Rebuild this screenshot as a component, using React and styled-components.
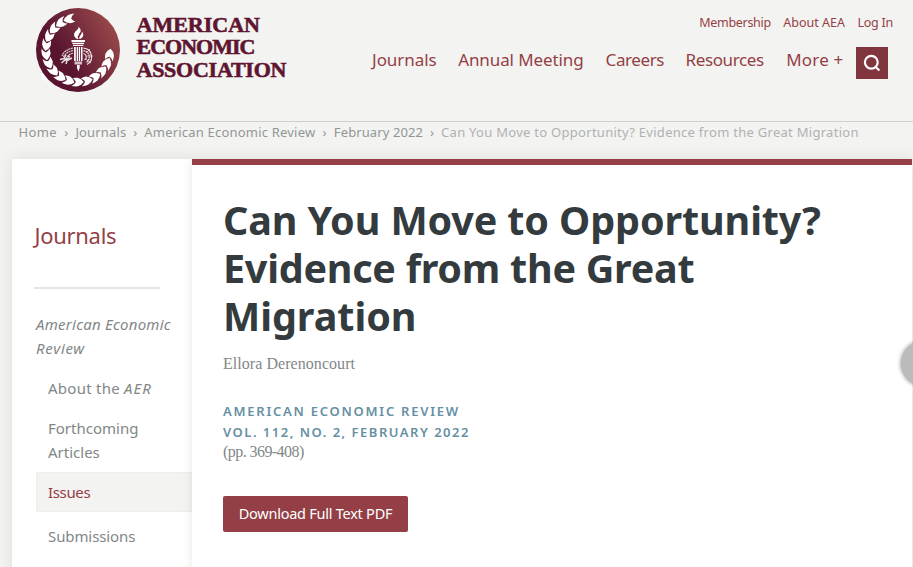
import React from "react";
import styled, { createGlobalStyle, css } from "styled-components";

const GlobalStyle = createGlobalStyle`
  * { box-sizing: border-box; }
  body {
    margin: 0;
    overflow: hidden;
    background: #f3f3f1;
    font-family: "Noto Sans", sans-serif;
    color: #818787;
  }
  a { color: inherit; text-decoration: none; }
`;

const tracking = css`letter-spacing: ${(p) => p.$track || 0}px;`;

const Page = styled.div`
  position: relative;
  width: 913px;
  height: 567px;
  overflow: hidden;
`;

const Header = styled.header`
  display: flex;
  justify-content: space-between;
  height: 122px;
  padding: 8px 20px 0 36px;
  border-bottom: 1px solid #cdd0ce;
`;

const Brand = styled.a`
  display: flex;
  gap: 16.5px;
`;

const Emblem = styled.svg`
  width: 84px;
  height: 84px;
  overflow: visible;
`;

const Wordmark = styled.div`
  display: flex;
  flex-direction: column;
  padding-top: 5.5px;
  font: bold 22px/22.5px "Liberation Serif", serif;
  color: #5f1530;
  -webkit-text-stroke: 0.6px #5f1530;
`;

const WordmarkLine = styled.span`
  white-space: nowrap;
  ${tracking}
`;

const Menus = styled.div`
  display: flex;
  flex-direction: column;
  align-items: flex-end;
  color: #943f46;
`;

const UtilityNav = styled.nav`
  display: flex;
  gap: 12.5px;
  padding-top: 5px;
  font-size: 12.5px;
  line-height: 20px;
`;

const MainNav = styled.nav`
  display: flex;
  margin: 11px 5px 0 0;
  font-size: 17px;
  line-height: 31px;
`;

const MenuLink = styled.a`
  white-space: nowrap;
  margin-right: ${(p) => p.$after || 0}px;
  ${tracking}
`;

const SearchButton = styled.button`
  width: 32px;
  height: 32px;
  margin-top: 3px;
  padding: 0;
  border: 0;
  background: #81363d;
  svg { display: block; }
`;

const Breadcrumbs = styled.nav`
  display: flex;
  height: 37px;
  padding-left: 18.5px;
  font-size: 13px;
  line-height: 20px;
  white-space: nowrap;
  color: #919796;
`;

const Crumb = styled.a`
  color: ${(p) => (p.$current ? "#afb2b1" : "inherit")};
  ${tracking}
`;

const Separator = styled.span`
  width: ${(p) => p.$width}px;
  text-align: center;
`;

const Panel = styled.div`
  display: flex;
  width: 900px;
  height: 420px;
  margin-left: 12px;
  background: #fff;
  box-shadow: 0 0 14px rgba(60, 60, 40, 0.11);
`;

const Sidebar = styled.aside`
  width: 180px;
  padding-top: 61px;
`;

const SidebarTitle = styled.h2`
  margin: 0 0 38px 22.5px;
  font-size: 22px;
  line-height: 30px;
  font-weight: 400;
  letter-spacing: -0.3px;
  color: #943f46;
`;

const Rule = styled.hr`
  width: 126px;
  height: 2px;
  margin: -1px 0 23px 22px;
  border: 0;
  background: #e4e5e5;
`;

const SideLink = styled.a`
  display: block;
  margin-left: 24px;
  padding: 8px 0 8px 12px;
  font-size: 15px;
  line-height: 24px;
  ${tracking}
  ${(p) => p.$heading && css`
    padding: 0 0 8px 0;
    font-style: italic;
  `}
  ${(p) => p.$active && css`
    margin-bottom: 4px;
    padding: 7px 0 7px 11px;
    background: #f3f3f1;
    border: 1px solid #eeefed;
    border-right: 0;
    border-radius: 2px 0 0 2px;
    color: #943f46;
  `}
`;

const Tracked = styled.span`
  ${tracking}
`;

const Article = styled.main`
  position: relative;
  width: 720px;
  padding: 31px 0 0 31px;
  border-top: 6px solid #943f46;
  background: #fff;
  box-shadow: 0 0 9px rgba(60, 60, 40, 0.12);
  clip-path: inset(0 0 0 -12px);
`;

const Title = styled.h1`
  margin: 0 0 14px;
  font-size: 39.5px;
  line-height: 48px;
  font-weight: 700;
  color: #343b3e;
`;

const Line = styled.span`
  display: block;
  white-space: nowrap;
  ${tracking}
`;

const Author = styled.div`
  margin-bottom: 27px;
  font: 16px/20px "Liberation Serif", serif;
  letter-spacing: 0.05px;
`;

const Issue = styled.a`
  display: block;
  font-size: 13px;
  line-height: 21px;
  font-weight: 600;
  color: #6690a3;
`;

const Pages = styled.div`
  font: 16px/18px "Liberation Serif", serif;
  letter-spacing: -0.56px;
`;

const DownloadButton = styled.button`
  display: block;
  width: 185px;
  height: 36px;
  margin-top: 35px;
  padding: 0 0 2px;
  border: 0;
  border-radius: 2px;
  background: #943f46;
  color: #fff;
  font: 14.5px/34px "Noto Sans", sans-serif;
  letter-spacing: -0.25px;
  white-space: nowrap;
`;

const FloatingTab = styled.div`
  position: absolute;
  left: 901px;
  top: 341px;
  width: 45px;
  height: 45px;
  border-radius: 50%;
  background: #bbb;
  box-shadow: 0 0 4px rgba(0, 0, 0, 0.5);
`;

const LEAVES = 16;

function Laurel() {
  return Array.from({ length: LEAVES }, (_, i) => {
    const angle = 9 + i * 16.4;
    return (
      <path
        key={i}
        transform={`rotate(${angle} 42 42) translate(74 40.5) rotate(-90)`}
        d="M-6.4,-3.9 Q-3.5,-4.5 -1,-4.3 Q2.8,-3 4.8,0 Q2.8,3 -1,4.3 Q-4,4.7 -7.4,4.1 Q-4.6,3 -3,0 Q-4.6,-3 -6.4,-3.9Z"
      />
    );
  });
}

function AssociationEmblem() {
  return (
    <Emblem viewBox="0 0 84 84">
      <defs>
        <linearGradient id="seal" x1="0.2" y1="0.65" x2="0.98" y2="0.2">
          <stop offset="0.15" stopColor="#591430" />
          <stop offset="1" stopColor="#9c4c4c" />
        </linearGradient>
      </defs>
      <path d="M5 63 L6 72 L14 73 Z" fill="#fff" />
      <circle cx="42" cy="42" r="42" fill="url(#seal)" />
      <g fill="#fff">
        <Laurel />
        <path d="M41 31 C36 28 38 24 42 21 Q43 19.5 42 18.5 Q47 22 43 26 Q41 28.5 42.5 31 Z" />
        <path d="M43.5 31 C42.5 28 46 27 46 23.5 C48.8 27 46.5 30.5 43.5 31 Z" />
        <path d="M35.5 32h13.4v2h-13.4z M36.3 34.8h11.8v1.2h-11.8z M37 36.7h10.4v1.3h-10.4z" />
        <path d="M38.1 39h1.7v14h-1.7z M40.7 39h1.3v14h-1.3z M42.8 39h1.3v14h-1.3z M45 39h1.5v14h-1.5z" />
        <path d="M41 57h2.7v3l-1.3 3.5-1.4-3.5z" />
      </g>
      <path d="M38.5 53.5h7.6v3h-7.6z" fill="#d6bfc7" />
      <g fill="none" stroke="#fff" strokeOpacity="0.85">
        <path d="M47.5 40.2 A8.7 8.7 0 0 1 51 56.5" strokeWidth="1.2" />
        <path d="M47.5 42.7 A6.3 6.3 0 0 1 50 54.5" strokeWidth="1.4" strokeDasharray="1.6 .6" />
        <path d="M47.5 45.5 A3.5 3.5 0 0 1 48.5 52" strokeWidth="1.2" />
        <path d="M50 45l4-4M51 48h6M50 51l5 4" strokeWidth=".7" />
        <path d="M37 40 Q28 42 26 48 M37 42.5 Q30 44 27.5 49 M37 45 Q31 47 29 53" strokeWidth="1.1" strokeDasharray="2 .5" />
        <path d="M24 51.5l4-1 2-3.5M25.5 55l3.5-3 4-2M30 56l1-3.5 5-2.5M28 50l2 1.5M32 47.5l2 2" strokeWidth="1.5" />
      </g>
    </Emblem>
  );
}

export default function App() {
  return (
    <Page>
      <GlobalStyle />
      <Header>
        <Brand href="#">
          <AssociationEmblem />
          <Wordmark>
            <WordmarkLine>AMERICAN</WordmarkLine>
            <WordmarkLine $track={-1}>ECONOMIC</WordmarkLine>
            <WordmarkLine $track={-0.25}>ASSOCIATION</WordmarkLine>
          </Wordmark>
        </Brand>
        <Menus>
          <UtilityNav>
            <MenuLink href="#" $track={-0.3}>Membership</MenuLink>
            <MenuLink href="#">About AEA</MenuLink>
            <MenuLink href="#" $track={-0.25}>Log In</MenuLink>
          </UtilityNav>
          <MainNav>
            <MenuLink href="#" $track={-0.05} $after={21.5}>Journals</MenuLink>
            <MenuLink href="#" $track={-0.1} $after={22}>Annual Meeting</MenuLink>
            <MenuLink href="#" $track={-0.4} $after={21.5}>Careers</MenuLink>
            <MenuLink href="#" $track={-0.4} $after={22.5}>Resources</MenuLink>
            <MenuLink href="#" $track={0.2} $after={12.5}>More +</MenuLink>
            <SearchButton aria-label="Search">
              <svg width="32" height="32" fill="none" stroke="#fff" strokeWidth="2.2">
                <circle cx="15.3" cy="15.3" r="6.4" />
                <path d="M19.2 19.5l4.2 4" />
              </svg>
            </SearchButton>
          </MainNav>
        </Menus>
      </Header>

      <Breadcrumbs>
        <Crumb href="#" $track={0.35}>Home</Crumb>
        <Separator $width={18.5}>›</Separator>
        <Crumb href="#" $track={0.15}>Journals</Crumb>
        <Separator $width={18}>›</Separator>
        <Crumb href="#" $track={0.2}>American Economic Review</Crumb>
        <Separator $width={18.5}>›</Separator>
        <Crumb href="#" $track={0.1}>February 2022</Crumb>
        <Separator $width={18}>›</Separator>
        <Crumb $current $track={0.28}>
          Can You Move to Opportunity? Evidence from the Great Migration
        </Crumb>
      </Breadcrumbs>

      <Panel>
        <Sidebar>
          <SidebarTitle>Journals</SidebarTitle>
          <Rule />
          <SideLink href="#" $heading $track={0.25}>
            American Economic <Tracked $track={0.7}>Review</Tracked>
          </SideLink>
          <SideLink href="#" $track={0.25}>
            About the <Tracked as="em" $track={1.1}>AER</Tracked>
          </SideLink>
          <SideLink href="#">Forthcoming<br />Articles</SideLink>
          <SideLink href="#" $active $track={-0.35}>Issues</SideLink>
          <SideLink href="#" $track={-0.1}>Submissions</SideLink>
        </Sidebar>
        <Article>
          <Title>
            <Line $track={-0.12}>Can You Move to Opportunity?</Line>
            <Line $track={-0.25}>Evidence from the Great</Line>
            <Line $track={-0.05}>Migration</Line>
          </Title>
          <Author>Ellora Derenoncourt</Author>
          <Issue href="#">
            <Line $track={1.75}>AMERICAN ECONOMIC REVIEW</Line>
            <Line $track={1.5}>VOL. 112, NO. 2, FEBRUARY 2022</Line>
          </Issue>
          <Pages>(pp. 369-408)</Pages>
          <DownloadButton>Download Full Text PDF</DownloadButton>
        </Article>
      </Panel>
      <FloatingTab />
    </Page>
  );
}
